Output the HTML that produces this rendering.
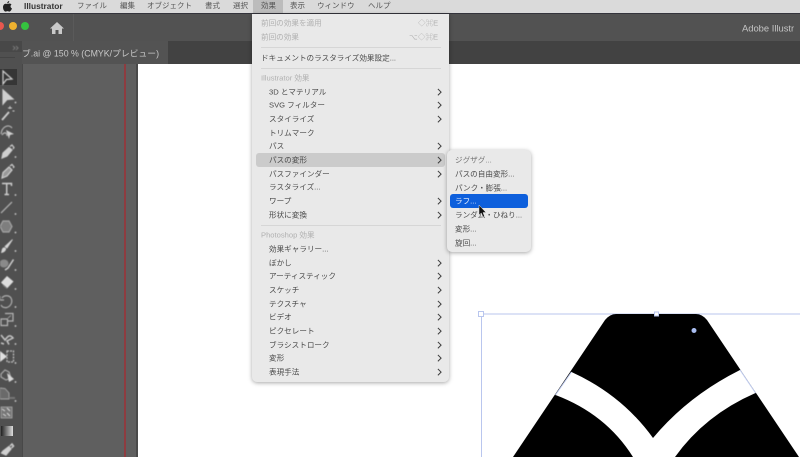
<!DOCTYPE html>
<html><head><meta charset="utf-8">
<style>
html,body{margin:0;padding:0;width:800px;height:457px;overflow:hidden;background:#fff}
body{font-family:"Liberation Sans","Noto Sans CJK JP",sans-serif;position:relative}
.b{position:absolute}
.t{position:absolute;white-space:nowrap;font-size:7.6px;line-height:12px;color:#4a4a4a;transform:translateY(-5.5px);filter:blur(.3px)}
.d{color:#b0b0b0}
.a{position:absolute;left:435.500px;width:3.500px;height:3.500px;border-top:1.500px solid #3c3c3c;border-right:1.500px solid #3c3c3c;transform:translateY(-2.5px) rotate(45deg);filter:blur(.2px)}
.m{position:absolute;white-space:nowrap;font-size:7.5px;line-height:12px;top:0;color:#555;filter:blur(.3px)}
</style></head><body>
<!-- title / tab bars -->
<div class="b" style="left:0;top:0;width:800px;height:13px;background:#dadada"></div>
<div class="b" style="left:0;top:13px;width:800px;height:1px;background:#34343c"></div>
<div class="b" style="left:0;top:14px;width:800px;height:27px;background:#525252"></div>
<div class="b" style="left:0;top:41px;width:800px;height:23px;background:#424242"></div>
<div class="b" style="left:0;top:41px;width:168px;height:23px;background:#535353"></div>
<div class="b" style="left:0;top:64px;width:800px;height:393px;background:#fff"></div>
<div class="b" style="left:23px;top:64px;width:113px;height:393px;background:#5f5f5f"></div>
<div class="b" style="left:124px;top:64px;width:2px;height:393px;background:#8e3c40"></div>
<div class="b" style="left:136px;top:64px;width:2px;height:393px;background:#4a4a4a"></div>
<div class="b" style="left:0;top:41px;width:22px;height:416px;background:#505050"></div>
<div class="b" style="left:22px;top:64px;width:1px;height:393px;background:#484848"></div>
<div class="b" style="left:0;top:41px;width:22px;height:11px;background:#484848"></div>
<div class="b" style="left:0;top:57px;width:15px;height:1px;background:#444"></div>
<div class="b" style="left:0;top:69px;width:17px;height:16px;background:#363636"></div>
<!-- traffic lights -->
<div class="b" style="left:-4px;top:22px;width:8px;height:8px;border-radius:50%;background:#e9574e"></div>
<div class="b" style="left:9px;top:22px;width:8px;height:8px;border-radius:50%;background:#eeb12f"></div>
<div class="b" style="left:21px;top:22px;width:8px;height:8px;border-radius:50%;background:#35c23f"></div>
<svg class="b" style="left:50px;top:21px" width="14" height="14" viewBox="0 0 14 14"><path d="M7 1L14 7.5H12V13H8.500V9H5.500V13H2V7.500H0Z" fill="#c9c9c9"/></svg>
<div class="b" style="left:73px;top:14px;width:1px;height:27px;background:#5a5a5a"></div>
<div class="t" style="left:22px;top:52.500px;font-size:8.800px;color:#c8c8c8">ブ.ai @ 150 % (CMYK/プレビュー)</div>
<div class="t" style="left:742px;top:28px;font-size:9.400px;color:#c4c4c4">Adobe Illustr</div>
<!-- menu bar -->
<div class="b" style="left:253px;top:0;width:30px;height:13px;background:#bcbcbc"></div>
<svg class="b" style="left:3px;top:1px" width="9" height="11" viewBox="0 0 9 11"><path d="M6.200 0C6.300 1.200 5.300 2.400 4.200 2.400C4.100 1.200 5.100 .2 6.200 0ZM4.400 3C5 3 5.600 2.500 6.500 2.500C7.200 2.500 8 2.900 8.500 3.600C7 4.500 7.300 6.700 9 7.400C8.500 8.800 7.500 10.600 6.400 10.600C5.700 10.600 5.300 10.100 4.500 10.100C3.700 10.100 3.300 10.600 2.600 10.600C1.300 10.600 0 8.300 0 6.200C0 4.100 1.300 2.700 2.700 2.700C3.400 2.700 3.900 3 4.400 3Z" fill="#222"/></svg>
<div class="m" style="left:24px;font-weight:bold;font-size:8.400px;color:#333">Illustrator</div>
<div class="m" style="left:77px">ファイル</div>
<div class="m" style="left:120px">編集</div>
<div class="m" style="left:147px">オブジェクト</div>
<div class="m" style="left:205px">書式</div>
<div class="m" style="left:233px">選択</div>
<div class="m" style="left:261px">効果</div>
<div class="m" style="left:290px">表示</div>
<div class="m" style="left:317px">ウィンドウ</div>
<div class="m" style="left:368px">ヘルプ</div>
<!-- artwork -->
<svg class="b" style="left:460px;top:300px" width="340" height="157" viewBox="0 0 340 157">
<path d="M22 14H340" stroke="#b9c6ee" stroke-width="1" fill="none"/>
<path d="M21.500 14V157" stroke="#b9c6ee" stroke-width="1"/>
<path d="M53 157L145 20Q150 14 156 14H236Q242 14 247 20L339 157Z" fill="#000"/>
<path d="M111.500 72Q162 95 193 138Q228 96 280 70L295.500 93Q245 115 215 157H173Q146 114 95.500 95Z" fill="#fff"/>
<path d="M111.500 72L95.500 95M280 70L295.500 93" stroke="#c3cff2" stroke-width="1"/>
<rect x="18.500" y="11.500" width="5" height="5" fill="#fff" stroke="#b9c6ee"/>
<rect x="194.500" y="12" width="4" height="4" fill="#fff" stroke="#b9c6ee"/>
<circle cx="234" cy="30.500" r="2.500" fill="#a9bdf0"/>
</svg>
<!-- tools -->
<svg class="b" style="left:0;top:0;filter:blur(.45px)" width="22" height="457" viewBox="0 0 22 457" fill="none" stroke="#cfcfcf" stroke-width="1.200">
<path d="M13 46L15 48L13 50M16 46L18 48L16 50" stroke="#888" stroke-width=".8"/>
<path d="M3 71V84L6.500 79.500L12 79Z"/>
<path d="M3 90V104L7 99.500L13 99Z" fill="#cfcfcf"/>
<path d="M2 120L9 112" stroke-width="1.800"/><path d="M10 106V109M8 108H12M12.500 111H14.500" stroke-width=".9"/>
<path d="M1 134C2 126 9 124 12 128M2 135C4 132 7 132 7 136" stroke="#b5b5b5"/><path d="M6 130L14 134L10 135L9 139Z" fill="#d0d0d0" stroke="none"/>
<path d="M2 158L3 153L9 147.500L12 150L7 156Z" fill="#cfcfcf"/><path d="M10 146.500L12 145L14 147.500L13 149"/>
<path d="M2 178L3 172.500L9 167L12 170L7 176Z" fill="#999"/><path d="M10 166L12 164.500L14 167L13 168"/>
<path d="M2 183.500H11.500V186M6.700 183.500V194M4.500 194.500H9" stroke-width="1.400"/>
<path d="M1 213L12 202" stroke="#b8b8b8"/>
<path d="M3 221H9L12 226.500L9 232H3L0 226.500Z" fill="#7e7e7e" stroke="#a5a5a5"/>
<path d="M12.500 239.500L7 248L5 246.500Z" fill="#d5d5d5" stroke="#d5d5d5" stroke-width=".8"/><path d="M1 253L2 249C3 247 5 247 6 248.500C6.500 251 3 253 1 253Z" fill="#d5d5d5" stroke="none"/>
<ellipse cx="4" cy="263.500" rx="4.500" ry="4" fill="#8a8a8a" stroke="none"/><path d="M5 270L8 268L13.500 259.500" stroke-width="1.500"/>
<path d="M1 282.500L7 276L13.500 281.500L7 288.500Z" fill="#dedede" stroke="none"/><path d="M3 285L7 288.500" stroke="#777"/>
<path d="M2 298C4 295 9 295 11 298C13 302 11 306 7 307.500C4 308 2 307 1 305M0 296V300H4" stroke="#b0b0b0"/>
<path d="M1 319H7.500V325.500H1ZM5 313.500H13V321H7.500" stroke="#b5b5b5"/><path d="M8 318L11 315.500" stroke="#b5b5b5" stroke-width=".8"/>
<path d="M1 335L5 340C8 336 10 334 13 338L7 341L9 344.500M1 343L4 344" stroke="#c5c5c5" stroke-width="1.500"/>
<path d="M0 351L7 356.500L0 362Z" fill="#e0e0e0" stroke="none"/><rect x="7" y="351" width="6.500" height="11" stroke="#c0c0c0" stroke-dasharray="2 1"/>
<path d="M1 374L5 370L9 372L11 378L6 380L1 377Z" stroke="#aaa"/><path d="M7 373L14 379L9 382Z" fill="#d8d8d8" stroke="none"/>
<path d="M0 388L5 388.500L9 393V399H0Z" fill="#6a6a6a" stroke="#a8a8a8" stroke-width=".9"/><path d="M9 397H15V399H9Z" fill="#777" stroke="none"/>
<rect x="1" y="407" width="11" height="11" fill="#777" stroke="#aaa" stroke-width=".8"/><path d="M2 409L5 411M7 408L10 411M3 414L6 416M7 413L10 416" stroke="#ddd" stroke-width=".9"/>
<path d="M1.500 453L3 451L9 446.500L11 449L6 455Z" fill="#d0d0d0"/><path d="M10 446L12 444L13.500 446L11.500 448" stroke-width="1.500"/>
<g stroke="none" fill="#cfcfcf"><circle cx="15.500" cy="102.500" r=".9"/><circle cx="15.500" cy="157" r=".9"/><circle cx="15.500" cy="195" r=".9"/><circle cx="15.500" cy="214" r=".9"/><circle cx="15.500" cy="232.500" r=".9"/><circle cx="15.500" cy="251" r=".9"/><circle cx="15.500" cy="270" r=".9"/><circle cx="15.500" cy="289" r=".9"/><circle cx="15.500" cy="307" r=".9"/><circle cx="15.500" cy="326" r=".9"/><circle cx="15.500" cy="344" r=".9"/><circle cx="15.500" cy="363" r=".9"/><circle cx="15.500" cy="382" r=".9"/><circle cx="15.500" cy="401" r=".9"/></g>
</svg>
<div class="b" style="left:1px;top:426px;width:12px;height:10px;background:linear-gradient(90deg,#222,#ddd);filter:blur(.3px)"></div>
<!-- effect menu -->
<div class="b" style="left:252px;top:14px;width:197px;height:368px;background:#e9e9e9;border-radius:0 0 5px 5px;box-shadow:0 1px 4px rgba(0,0,0,.35)"></div>
<div class="b" style="left:256px;top:153px;width:189px;height:14px;background:#cbcbcb;border-radius:3px"></div>
<div class="b" style="left:261px;top:47px;width:180px;height:1px;background:#d6d6d6"></div>
<div class="b" style="left:261px;top:68px;width:180px;height:1px;background:#d6d6d6"></div>
<div class="b" style="left:261px;top:225px;width:180px;height:1px;background:#d6d6d6"></div>
<div class="t d" style="left:261px;top:23px">前回の効果を適用</div>
<div class="t d" style="left:418px;top:23px">◇⌘E</div>
<div class="t d" style="left:261px;top:36.500px">前回の効果</div>
<div class="t d" style="left:409px;top:36.500px">⌥◇⌘E</div>
<div class="t" style="left:261px;top:57.500px">ドキュメントのラスタライズ効果設定...</div>
<div class="t d" style="left:261px;top:78px">Illustrator 効果</div>
<div class="t" style="left:269px;top:91.500px">3D とマテリアル</div><div class="a" style="top:91.500px"></div>
<div class="t" style="left:269px;top:105px">SVG フィルター</div><div class="a" style="top:105px"></div>
<div class="t" style="left:269px;top:119px">スタイライズ</div><div class="a" style="top:119px"></div>
<div class="t" style="left:269px;top:133px">トリムマーク</div>
<div class="t" style="left:269px;top:146px">パス</div><div class="a" style="top:146px"></div>
<div class="t" style="left:269px;top:160px">パスの変形</div><div class="a" style="top:160px"></div>
<div class="t" style="left:269px;top:174px">パスファインダー</div><div class="a" style="top:174px"></div>
<div class="t" style="left:269px;top:187px">ラスタライズ...</div>
<div class="t" style="left:269px;top:201px">ワープ</div><div class="a" style="top:201px"></div>
<div class="t" style="left:269px;top:215px">形状に変換</div><div class="a" style="top:215px"></div>
<div class="t d" style="left:261px;top:235px">Photoshop 効果</div>
<div class="t" style="left:269px;top:249px">効果ギャラリー...</div>
<div class="t" style="left:269px;top:263px">ぼかし</div><div class="a" style="top:263px"></div>
<div class="t" style="left:269px;top:276px">アーティスティック</div><div class="a" style="top:276px"></div>
<div class="t" style="left:269px;top:290px">スケッチ</div><div class="a" style="top:290px"></div>
<div class="t" style="left:269px;top:304px">テクスチャ</div><div class="a" style="top:304px"></div>
<div class="t" style="left:269px;top:317px">ビデオ</div><div class="a" style="top:317px"></div>
<div class="t" style="left:269px;top:331px">ピクセレート</div><div class="a" style="top:331px"></div>
<div class="t" style="left:269px;top:345px">ブラシストローク</div><div class="a" style="top:345px"></div>
<div class="t" style="left:269px;top:358px">変形</div><div class="a" style="top:358px"></div>
<div class="t" style="left:269px;top:372px">表現手法</div><div class="a" style="top:372px"></div>
<!-- submenu -->
<div class="b" style="left:447px;top:150px;width:84px;height:102px;background:#e9e9e9;border-radius:5px;box-shadow:0 1px 4px rgba(0,0,0,.35)"></div>
<div class="b" style="left:450px;top:194px;width:78px;height:14px;background:#0d5fdc;border-radius:3px"></div>
<div class="t" style="left:455px;top:160px;color:#777">ジグザグ...</div>
<div class="t" style="left:455px;top:174px">パスの自由変形...</div>
<div class="t" style="left:455px;top:187.500px">パンク・膨張...</div>
<div class="t" style="left:455px;top:201px;color:#f2f6ff">ラフ...</div>
<div class="t" style="left:455px;top:215px">ランダム・ひねり...</div>
<div class="t" style="left:455px;top:229px">変形...</div>
<div class="t" style="left:455px;top:242.500px">旋回...</div>
<svg class="b" style="left:478px;top:205px" width="9" height="13" viewBox="0 0 9 13"><path d="M1 0V10L3.300 8L5 12L6.500 11.300L5 7.500H8Z" fill="#111" stroke="#ddd" stroke-width=".5"/></svg>
</body></html>
